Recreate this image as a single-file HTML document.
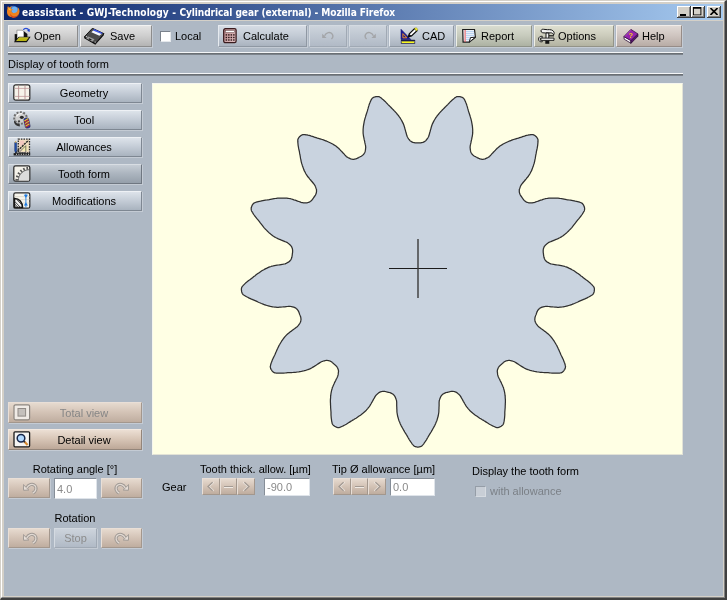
<!DOCTYPE html><html><head><meta charset="utf-8"><title>eassistant - GWJ-Technology - Cylindrical gear (external) - Mozilla Firefox</title><style>
html,body{margin:0;padding:0;}
body{width:727px;height:600px;overflow:hidden;background:#d4d0c8;font-family:"Liberation Sans",Arial,sans-serif;font-size:11px;line-height:13px;color:#000;position:relative;}
#wrap{position:absolute;left:0;top:0;width:727px;height:600px;will-change:transform;}
.abs{position:absolute;}
#frame{position:absolute;left:0;top:0;width:724px;height:597px;border:solid;border-width:1px 2px 2px 1px;border-color:#d4d0c8 #404040 #404040 #d4d0c8;}
#frame2{position:absolute;left:1px;top:1px;width:722px;height:595px;border:1px solid;border-color:#fff #808080 #808080 #fff;}
#title{position:absolute;left:4px;top:4px;width:719px;height:16px;background:linear-gradient(to right,#0a246a 0%,#a6caf0 100%);}
#title .t{position:absolute;left:17.500px;top:0px;font:bold 10.600px/16px "DejaVu Sans Condensed","DejaVu Sans","Liberation Sans",sans-serif;color:#fff;white-space:nowrap;transform:scaleX(.9535);transform-origin:0 0;}
#content{position:absolute;left:4px;top:21px;width:719px;height:575px;background:#aeb8c4;}
.wb{position:absolute;top:6px;width:14px;height:12px;background:#d4d0c8;box-shadow:inset -1px -1px 0 #404040,inset 1px 1px 0 #fff,inset -2px -2px 0 #808080;}
.tb{position:absolute;top:25px;height:22px;box-sizing:border-box;border-width:1px;border-style:solid;white-space:nowrap;}
.tb span{position:absolute;top:4px;}
.c-grey{border-color:#f2f2f2 #8c8c8c #8c8c8c #f2f2f2;background:linear-gradient(#e3e3e3,#d0d0d0 45%,#b4b4b4);}
.c-blue{border-color:#e6eaef #8f98a3 #8f98a3 #e6eaef;background:linear-gradient(#d6dce4,#c4ccd6 45%,#aab3bf);}
.c-dis{border-color:#d4dae1 #a0a9b4 #a0a9b4 #d4dae1;background:linear-gradient(#cdd4dc,#c0c8d2 45%,#b1bac6);}
.c-green{border-color:#eceee6 #8f9388 #8f9388 #eceee6;background:linear-gradient(#d9dcd0,#c8ccbe 45%,#adb2a3);}
.c-olive{border-color:#efefe6 #939388 #939388 #efefe6;background:linear-gradient(#dedfd0,#cdcdbd 45%,#b3b3a2);}
.c-pink{border-color:#f1ece9 #968c88 #968c88 #f1ece9;background:linear-gradient(#e0d9d5,#d0c6c1 45%,#b8aca6);}
.c-beige{border-color:#f3e9e0 #93857a #93857a #f3e9e0;background:linear-gradient(#ecdfd4,#d9c7b8 45%,#bda898);}
.c-beiged{border-color:#e9dfd7 #a3978d #a3978d #e9dfd7;background:linear-gradient(#e6dacf,#d5c5b8 45%,#bfad9f);}
.c-nav{border-color:#eef1f5 #7e8792 #7e8792 #eef1f5;background:linear-gradient(#dde3ea,#c6ced8 45%,#a9b3bf);}
.c-navsel{border-color:#d8dde3 #6f7781 #6f7781 #d8dde3;background:linear-gradient(#c6cdd5,#adb6c0 45%,#959faa);}
.sep{position:absolute;left:8px;width:675px;height:3px;}
.sep i{position:absolute;left:0;top:0;width:100%;height:1px;background:#f4f6f8;}
.sep b{position:absolute;left:0;top:1px;width:100%;height:1px;background:#6a6f74;}
.sep u{position:absolute;left:0;top:2px;width:100%;height:1px;background:#7d848c;}
.nb{position:absolute;left:8px;width:134px;height:20px;box-sizing:border-box;border-width:1px;border-style:solid;}
.nb span{position:absolute;left:18px;right:0;top:3px;text-align:center;}
.rb{position:absolute;height:20px;box-sizing:border-box;border-width:1px;border-style:solid;}
.sb{position:absolute;top:478px;height:17px;box-sizing:border-box;border-width:1px;border-style:solid;}
.tf{position:absolute;box-sizing:border-box;background:#fff;border:1px solid;border-color:#868e98 #dfe4ea #dfe4ea #868e98;color:#8a8a8a;}
.tf span{position:absolute;left:2px;top:2px;}
.lbl{position:absolute;white-space:nowrap;}
.ico{position:absolute;}
.tb,.nb,.rb{box-shadow:1px 1px 0 rgba(255,255,255,.28);}
</style></head><body>
<div id="wrap"><div id="frame"></div><div id="frame2"></div>
<div id="title"><svg class="ico" style="left:1.500px;top:0.500px" width="14" height="14" viewBox="0 0 14 14"><circle cx="7.300" cy="6.500" r="5.800" fill="#2f6fd6"/><circle cx="8.500" cy="5" r="3.200" fill="#6fb0f0"/><path d="M1.500 3.500C1.200 2.500 1.600 1.500 2.200 1c.1.800.5 1.300 1 1.600C4.500 1.500 6 1.200 7 1.500 5.500 2 4.800 3 4.800 4c.8.300 1.800.200 2.400.600-.6.800-1.500.900-1.900 1.400.3 1.300 1.500 2.100 2.800 2.100 1.800 0 3.200-1.200 3.600-2.800.4-1.200.2-2.400-.2-3.300 1.400 1 2.200 2.800 2 4.800-.3 3-2.800 5.200-5.800 5.200C4 13 1 10.300 1 7c0-1.300.1-2.500.5-3.500z" fill="#f0821e"/><path d="M7.500 13c3-.1 5.300-2.300 5.900-5-.6 2-2.500 3.400-4.700 3.400-2 0-3.800-1.200-4.500-3-.2 2.400 1.200 4.300 3.300 4.600z" fill="#d9491a"/><path d="M2 3.500c.8-.5 1.800-.3 2.600.3-.2.600-.1 1.200.2 1.700C3.600 5.500 2.600 4.700 2 3.500z" fill="#fbc32d"/></svg><span class="t"><span style="letter-spacing:.13px">eassistant - GWJ-Technology - </span><span style="letter-spacing:-.1px">Cylindrical gear (external) - Mozilla Firefox</span></span></div>
<div class="wb" style="left:677px"><div class="abs" style="left:3px;top:8px;width:6px;height:2px;background:#000"></div></div>
<div class="wb" style="left:691px"><div class="abs" style="left:2px;top:1px;width:7px;height:6px;border:1px solid #000;border-top-width:2px;box-sizing:content-box;transform:scale(.93);transform-origin:0 0"></div></div>
<div class="wb" style="left:707px"><svg class="ico" style="left:3px;top:2px" width="8" height="7" viewBox="0 0 8 7"><path d="M.5 0L7.500 7M7.500 0L.5 7" stroke="#000" stroke-width="1.600"/></svg></div>
<div id="content"></div>
<div class="tb c-grey" style="left:8px;width:70px"><svg class="ico" style="left:4px;top:1px" width="18" height="17" viewBox="-1 -1 17 16"><path d="M2.700 2h5l1.600 1.600v6.400H2.700z" fill="#fff" stroke="#777" stroke-width=".6"/><path d="M9.300 2.900l3.300 2.800v3H9.300z" fill="#111"/><path d="M.6 5.700h2.300v7.100H.6z" fill="#111"/><path d="M1 12.800L4.700 8.600h10L11.800 12.800z" fill="#b9b512" stroke="#111" stroke-width="1"/><path d="M2.300 12.300l2.700-3.200h8.800" fill="none" stroke="#dedb4c" stroke-width=".7"/><path d="M8.800 1.800c.8-2 4-2.300 5.300.3" fill="none" stroke="#2a4fd8" stroke-width="1.200"/><path d="M14.900 0.800l-.2 3-2.500-1.300z" fill="#1a3fd0"/></svg><span style="left:25px">Open</span></div>
<div class="tb c-grey" style="left:80px;width:72px"><svg class="ico" style="left:3px;top:2px" width="21" height="17" viewBox="0 0 21 17"><path d="M8.400.3L20 5.700 11.300 15.600.2 9z" fill="#4a4a4a" stroke="#151515" stroke-width="1"/><path d="M.2 9l11.100 6.600L20 5.700v1.400l-8.700 9.700L.2 10.300z" fill="#0c0c0c"/><path d="M10 1.100l8.700 3.800-1.100 1.200L9 2.400z" fill="#3a55f0"/><path d="M9 2.400l8.600 3.700-2.200 1.600L7.400 4.300z" fill="#f4f6ff"/><path d="M4.300 8.400l6.200 2.900-2.100 2.500L2.200 10.500z" fill="#9c9c9c"/><path d="M5.200 10.300l2.600 1.300-.9 1L4.400 11.200z" fill="#1a1a1a"/><circle cx="2.600" cy="8.600" r=".6" fill="#ddd"/><circle cx="11.200" cy="14" r=".6" fill="#ddd"/></svg><span style="left:29px">Save</span></div>
<div class="abs" style="left:160px;top:31px;width:11px;height:11px;box-sizing:border-box;background:#fff;border:1px solid;border-color:#7a828c #e4e8ec #e4e8ec #7a828c"></div><div class="lbl" style="left:175px;top:30px">Local</div>
<div class="tb c-blue" style="left:218px;width:89px"><svg class="ico" style="left:4px;top:2px" width="14" height="16" viewBox="0 0 14 16"><defs><linearGradient id="cg" x1="0" y1="0" x2="1" y2="1"><stop offset="0" stop-color="#b88486"/><stop offset="1" stop-color="#e6c6c8"/></linearGradient></defs><rect x=".7" y=".7" width="12.400" height="14" rx="1.600" fill="url(#cg)" stroke="#3a1c1e" stroke-width="1.300"/><rect x="2.300" y="2.400" width="9.200" height="2.200" fill="#fff" stroke="#5a3a3a" stroke-width=".5"/><rect x="2.6" y="6.2" width="1.500" height="1.400" fill="#2a1616"/><rect x="5.1" y="6.2" width="1.500" height="1.400" fill="#2a1616"/><rect x="7.6" y="6.2" width="1.500" height="1.400" fill="#2a1616"/><rect x="10.1" y="6.2" width="1.500" height="1.400" fill="#2a1616"/><rect x="2.6" y="8.8" width="1.500" height="1.400" fill="#2a1616"/><rect x="5.1" y="8.8" width="1.500" height="1.400" fill="#2a1616"/><rect x="7.6" y="8.8" width="1.500" height="1.400" fill="#2a1616"/><rect x="10.1" y="8.8" width="1.500" height="1.400" fill="#2a1616"/><rect x="2.6" y="11.3" width="1.500" height="1.400" fill="#2a1616"/><rect x="5.1" y="11.3" width="1.500" height="1.400" fill="#2a1616"/><rect x="7.6" y="11.3" width="1.500" height="1.400" fill="#2a1616"/><rect x="10.1" y="11.3" width="1.500" height="1.400" fill="#2a1616"/></svg><span style="left:24px">Calculate</span></div>
<div class="tb c-dis" style="left:309px;width:38px"><svg class="ico" style="left:12px;top:5px" width="12" height="9" viewBox="0 0 12 9"><path d="M.2 2.800V7.100H4.600z" fill="#a3a5a8"/><path d="M2.600 4.700C4 1.300 8.300.400 10.200 3.200c1.200 1.800.5 3.700-.8 4.800" fill="none" stroke="#a3a5a8" stroke-width="1.400"/></svg><span style="left:-310px"></span></div>
<div class="tb c-dis" style="left:349px;width:38px"><svg class="ico" style="left:14px;top:5px" width="12" height="9" viewBox="0 0 12 9"><g transform="translate(12,0) scale(-1,1)"><path d="M.2 2.800V7.100H4.600z" fill="#a3a5a8"/><path d="M2.600 4.700C4 1.300 8.300.400 10.200 3.200c1.200 1.800.5 3.700-.8 4.800" fill="none" stroke="#a3a5a8" stroke-width="1.400"/></g></svg><span style="left:-350px"></span></div>
<div class="tb c-blue" style="left:389px;width:65px"><svg class="ico" style="left:10px;top:1px" width="19" height="18" viewBox="0 0 19 18"><path d="M1 2.300V12.500H10.800z" fill="#1c1c96" stroke="#14146e" stroke-width=".6"/><path d="M2.900 6.600V10.800H6.900z" fill="#1c1c96" stroke="#ee8a1e" stroke-width="1"/><rect x="1.200" y="13.600" width="13.600" height="2.800" fill="#f8f820" stroke="#14145a" stroke-width=".7"/><path d="M1.200 13.300h13.600" stroke="#101040" stroke-width="1"/><path d="M3 13.500v1.400M5 13.500v1.400M7 13.500v1.400M9 13.500v1.400M11 13.500v1.400M13 13.500v1.400" stroke="#14145a" stroke-width=".8"/><path d="M8.300 9.800l1-3 5.300-5.300 2.400 2.200-5.500 5.200z" fill="#fff" stroke="#0c0c0c" stroke-width="1.200"/><path d="M8.300 9.800l1-2.800 2 1.800z" fill="#0c0c0c"/><path d="M14.300 1.800l1.700-1.300 1.900 1.800-1.300 1.700z" fill="#f6f230" stroke="#77771a" stroke-width=".4"/></svg><span style="left:32px">CAD</span></div>
<div class="tb c-green" style="left:456px;width:76px"><svg class="ico" style="left:5px;top:3px" width="15" height="15" viewBox="0 0 15 15"><path d="M.7.500H12.500l.9 7.700L7.200 13.200H1.100z" fill="#eef3fa" stroke="#1c1c1c" stroke-width="1.200"/><path d="M3.800 2.600h8.200M3.800 4.600h8.400M3.800 6.600h8.500M3.800 8.600h6M3.800 10.600h3.500" stroke="#a8c8ee" stroke-width=".8"/><path d="M3.100 1v12" stroke="#f04848" stroke-width=".9"/><path d="M7.200 13.200L8.500 8.600l4.900-.4z" fill="#fff" stroke="#1c1c1c" stroke-width="1"/></svg><span style="left:24px">Report</span></div>
<div class="tb c-olive" style="left:534px;width:80px"><svg class="ico" style="left:3px;top:2px" width="18" height="17" viewBox="0 0 18 17"><path d="M3 3c0-1.300 1.200-2 2.600-1.700l4 .4c2.800-.3 5.300.2 6.300 2.200.5 1 .2 2.300-.3 3-.4-1.400-1.400-2-2.700-2.100l-2 .1H7.500C5.500 5 3 4.900 3 3z" fill="#f2f2f2" stroke="#141414" stroke-width="1"/><path d="M8 5h2.800v8H8z" fill="#f6f6f6" stroke="#141414" stroke-width="1"/><path d="M7.300 12.600h4v3.200h-4z" fill="#141414"/><path d="M4.300 8.300C2.300 7.900.5 9.200.5 11.100s1.800 3.200 3.800 2.700l-.3-1.500H2.400v-2.200H4z" fill="#f0f0f0" stroke="#141414" stroke-width=".9"/><path d="M4 10.100h12v2.300H4" fill="#f4f4f4" stroke="#141414" stroke-width=".9"/><path d="M11 7.800h5" stroke="#141414" stroke-width="1.200"/></svg><span style="left:23px">Options</span></div>
<div class="tb c-pink" style="left:616px;width:66px"><svg class="ico" style="left:6px;top:3px" width="16" height="15" viewBox="0 0 16 15"><path d="M.9 7.600L7.900 11.500V14.200L1.200 10.200z" fill="#fff" stroke="#2a0a34" stroke-width=".8"/><path d="M7.900 11.500L14.900 4.900V7.300L7.900 14.400z" fill="#5a1470" stroke="#2a0a34" stroke-width=".8"/><path d="M7.900.4L14.900 4.900 7.900 11.500.9 7.600z" fill="#9424ac" stroke="#3a0e48" stroke-width=".8"/><path d="M7.900 1.200L2 7.500" stroke="#c060d8" stroke-width=".6"/><text x="5.600" y="8.600" font-family="Liberation Sans,sans-serif" font-weight="bold" font-size="7.500" fill="#f6d020">?</text></svg><span style="left:25px">Help</span></div>
<div class="sep" style="top:52px"><i></i><b></b><u></u></div>
<div class="lbl" style="left:8px;top:58px">Display of tooth form</div>
<div class="sep" style="top:73px"><i></i><b></b><u></u></div>
<div class="nb c-nav" style="top:83px"><svg class="ico" style="left:4px;top:0px" width="18" height="17" viewBox="0 0 18 17"><rect x=".8" y=".8" width="16" height="15.400" rx="2" fill="#f6f3ea" stroke="#2c2c2c" stroke-width="1.250"/><path d="M1.500 4.400h15M1.500 12.400h15" stroke="#c8a4a4" stroke-width=".9"/><path d="M5.600 1.500v14M12 1.500v14" stroke="#b49090" stroke-width=".9"/></svg><span>Geometry</span></div>
<div class="nb c-nav" style="top:110px"><svg class="ico" style="left:4px;top:0px" width="18" height="18" viewBox="0 0 18 18"><ellipse cx="7.500" cy="7" rx="6.300" ry="5.800" fill="#bcbcbc" stroke="#6e6e6e" stroke-width="2" stroke-dasharray="1.900 1.500"/><ellipse cx="7.500" cy="7" rx="5" ry="4.600" fill="#cfcfcf"/><path d="M3.500 5.500c1-2 3-3 5.500-2.800" fill="none" stroke="#f4f4f4" stroke-width="1.300"/><path d="M1.300 9c1 2.500 3 4 5.500 4.300v2.200c-3-.2-5-1.800-5.800-4.200z" fill="#333"/><ellipse cx="8.800" cy="6.300" rx="2" ry="1.600" fill="#2a2a2a"/><ellipse cx="6" cy="10.300" rx="1.200" ry="1" fill="#444"/><g transform="rotate(-12 14 12)"><rect x="11.600" y="7" width="4.800" height="10" rx="1.600" fill="#2436b4" stroke="#1a1a50" stroke-width=".6"/><path d="M11.800 9.500l4.400-1.600M11.800 12.200l4.400-1.600M11.800 14.900l4.400-1.600" stroke="#f2c61e" stroke-width="1.100"/><path d="M11.800 10.800l4.400-1.600M11.800 13.500l4.400-1.600M11.900 16.100l4.300-1.500" stroke="#cc2a20" stroke-width="1"/></g></svg><span>Tool</span></div>
<div class="nb c-nav" style="top:137px"><svg class="ico" style="left:4px;top:0px" width="18" height="18" viewBox="0 0 18 18"><rect x="5.300" y="1.200" width="11.200" height="13.600" fill="#f0dcc0" stroke="#2a2a2a" stroke-width="1.300" stroke-dasharray="1.500 1.100"/><rect x="6.600" y="2.600" width="4.400" height="5" fill="#f2c8c0"/><rect x="9.500" y="7.600" width="5" height="5.400" fill="#f4ecb0"/><path d="M2.500 15L15.400 2.300" stroke="#2a2a2a" stroke-width="1.500" stroke-dasharray="2.200 .8"/><path d="M6 14.500l6.800-6.800v6.800z" fill="none" stroke="#555" stroke-width=".8"/><path d="M.6 16.300h16.600" stroke="#1c1c1c" stroke-width="2.400"/><path d="M3 16.300h13" stroke="#f4f4f4" stroke-width=".9" stroke-dasharray="1 1.400"/><path d="M1.700 4.500h1.900v8.300l-.95 2-.95-2z" fill="#1e4fb0" stroke="#14285a" stroke-width=".5"/><path d="M1.700 4.500l.95-1.700.95 1.700z" fill="#e0b040"/></svg><span>Allowances</span></div>
<div class="nb c-navsel" style="top:164px"><svg class="ico" style="left:4px;top:0px" width="18" height="17" viewBox="0 0 18 17"><rect x=".8" y=".8" width="16" height="15.400" rx="1.800" fill="#f4f2ea" stroke="#2c2c2c" stroke-width="1.250"/><path d="M5.400 15.500C5.400 9.500 10.300 4.800 16.100 4.800V15.500z" fill="#dcdcdc"/><path d="M3.900 15.600C3.900 8.700 9.500 3.300 16.200 3.300" fill="none" stroke="#555" stroke-width="3" stroke-dasharray="1.600 1.700"/><path d="M5.300 15.600C5.300 9.500 10.200 4.700 16.200 4.700" fill="none" stroke="#6a6a6a" stroke-width="1"/></svg><span>Tooth form</span></div>
<div class="nb c-nav" style="top:191px"><svg class="ico" style="left:4px;top:0px" width="18" height="17" viewBox="0 0 18 17"><rect x=".8" y=".8" width="16" height="15.400" rx="1.800" fill="#f6f4ec" stroke="#2c2c2c" stroke-width="1.250"/><path d="M1.500 4.600h15M1.500 7.600h15M10 11h6.500" stroke="#d8d4c8" stroke-width=".8"/><path d="M1.500 6.600c4.800 0 8 3.600 8 9H1.500z" fill="#f0f0f0" stroke="#141414" stroke-width="1.500"/><path d="M1.800 9.500l5.700 6M1.800 12l3.800 4M1.800 14.300l1.700 1.800M3.700 7.400l5.200 5.600" stroke="#333" stroke-width=".9"/><path d="M12.900 1.500v14" stroke="#2f86e0" stroke-width="1"/><path d="M10.800 2.700h4.200l-2.100 3zM10.800 13.400h4.200l-2.100-3z" fill="#1f7ae0"/></svg><span>Modifications</span></div>
<div class="abs" style="left:152px;top:83px;width:531px;height:372px;background:#ffffe4;box-sizing:border-box;border:1px solid;border-color:#f6f6ee #e2e2d6 #e2e2d6 #f6f6ee"></div>
<svg class="abs" style="left:0;top:0" width="727" height="600" viewBox="0 0 727 600"><path d="M448.2 392.1 L447.6 392.3 L447.0 392.4 L446.4 392.5 L445.8 392.7 L445.3 392.9 L444.8 393.1 L444.3 393.3 L443.8 393.6 L443.4 393.8 L442.9 394.1 L442.5 394.5 L442.1 394.9 L441.7 395.3 L441.4 395.7 L441.1 396.1 L440.8 396.6 L440.6 397.0 L440.4 397.5 L440.2 398.0 L440.0 398.5 L439.8 399.0 L439.6 399.5 L439.5 399.9 L439.3 400.5 L439.2 401.3 L439.1 402.2 L439.1 403.4 L439.1 404.7 L439.1 406.0 L439.0 407.2 L439.0 408.5 L438.9 409.9 L438.9 411.2 L438.8 412.5 L438.6 413.7 L438.4 414.9 L438.2 416.0 L437.9 417.0 L437.6 418.0 L437.3 419.1 L437.0 420.2 L436.6 421.2 L436.1 422.3 L435.7 423.4 L435.2 424.5 L434.7 425.6 L434.1 426.6 L433.5 427.7 L432.9 428.8 L432.3 429.9 L431.7 430.9 L431.1 432.0 L430.4 433.1 L429.7 434.2 L429.1 435.2 L428.4 436.3 L427.8 437.5 L427.1 438.6 L426.5 439.7 L425.9 440.7 L425.2 441.7 L424.5 442.6 L423.9 443.5 L423.3 444.3 L422.8 444.9 L422.4 445.3 L422.1 445.7 L421.9 445.9 L421.7 446.0 L421.4 446.2 L421.1 446.4 L420.8 446.5 L420.5 446.6 L420.1 446.7 L419.8 446.8 L419.4 446.9 L419.1 446.9 L418.7 447.0 L418.3 447.0 L417.9 447.0 L417.5 447.0 L417.1 447.0 L416.7 446.9 L416.4 446.9 L416.0 446.8 L415.7 446.7 L415.3 446.6 L415.0 446.5 L414.7 446.4 L414.4 446.2 L414.1 446.0 L413.9 445.9 L413.7 445.7 L413.4 445.3 L413.0 444.9 L412.5 444.3 L411.9 443.5 L411.3 442.6 L410.6 441.7 L409.9 440.7 L409.3 439.7 L408.7 438.6 L408.0 437.5 L407.4 436.3 L406.7 435.2 L406.1 434.2 L405.4 433.1 L404.7 432.0 L404.1 430.9 L403.5 429.9 L402.9 428.8 L402.3 427.7 L401.7 426.6 L401.1 425.6 L400.6 424.5 L400.1 423.4 L399.7 422.3 L399.2 421.2 L398.8 420.2 L398.5 419.1 L398.2 418.0 L397.9 417.0 L397.6 416.0 L397.4 414.9 L397.2 413.7 L397.0 412.5 L396.9 411.2 L396.9 409.9 L396.8 408.5 L396.8 407.2 L396.7 406.0 L396.7 404.7 L396.7 403.4 L396.7 402.2 L396.6 401.3 L396.5 400.5 L396.3 399.9 L396.2 399.5 L396.0 399.0 L395.8 398.5 L395.6 398.0 L395.4 397.5 L395.2 397.0 L395.0 396.6 L394.7 396.1 L394.4 395.7 L394.1 395.3 L393.7 394.9 L393.3 394.5 L392.9 394.1 L392.4 393.8 L392.0 393.6 L391.5 393.3 L391.0 393.1 L390.5 392.9 L390.0 392.7 L389.4 392.5 L388.8 392.4 L388.2 392.3 L387.6 392.1 L387.0 392.0 L386.5 391.8 L385.9 391.7 L385.3 391.5 L384.7 391.4 L384.2 391.4 L383.6 391.4 L383.1 391.4 L382.6 391.4 L382.0 391.5 L381.5 391.6 L381.0 391.7 L380.5 391.9 L379.9 392.1 L379.5 392.4 L379.0 392.6 L378.6 392.9 L378.2 393.3 L377.8 393.6 L377.4 394.0 L377.0 394.3 L376.7 394.6 L376.3 395.0 L375.9 395.4 L375.4 396.1 L374.9 396.9 L374.4 397.9 L373.7 399.0 L373.1 400.1 L372.5 401.3 L371.8 402.4 L371.2 403.5 L370.5 404.7 L369.8 405.8 L369.1 406.8 L368.4 407.7 L367.7 408.6 L367.0 409.4 L366.3 410.2 L365.5 411.0 L364.7 411.7 L363.8 412.5 L362.9 413.3 L362.0 414.0 L361.1 414.7 L360.1 415.4 L359.1 416.1 L358.1 416.8 L357.1 417.5 L356.1 418.2 L355.0 418.8 L353.9 419.5 L352.8 420.1 L351.7 420.8 L350.7 421.4 L349.6 422.1 L348.5 422.8 L347.4 423.5 L346.3 424.2 L345.3 424.8 L344.3 425.3 L343.2 425.9 L342.3 426.3 L341.4 426.7 L340.6 427.0 L340.1 427.3 L339.7 427.4 L339.4 427.5 L339.1 427.5 L338.8 427.5 L338.4 427.6 L338.1 427.6 L337.8 427.5 L337.4 427.5 L337.1 427.4 L336.7 427.3 L336.4 427.1 L336.0 427.0 L335.7 426.8 L335.3 426.6 L335.0 426.5 L334.6 426.3 L334.3 426.1 L334.0 425.8 L333.7 425.6 L333.5 425.4 L333.2 425.1 L333.0 424.9 L332.8 424.6 L332.6 424.3 L332.5 424.0 L332.3 423.8 L332.2 423.5 L332.1 423.1 L332.0 422.5 L331.8 421.7 L331.6 420.8 L331.5 419.7 L331.3 418.5 L331.2 417.4 L331.1 416.2 L331.0 414.9 L331.0 413.6 L331.0 412.3 L330.9 411.0 L330.8 409.8 L330.7 408.5 L330.6 407.3 L330.6 406.0 L330.5 404.8 L330.5 403.5 L330.4 402.3 L330.4 401.1 L330.4 399.9 L330.5 398.7 L330.6 397.5 L330.6 396.3 L330.8 395.2 L330.9 394.0 L331.1 392.9 L331.3 391.8 L331.5 390.8 L331.8 389.7 L332.1 388.7 L332.4 387.5 L332.9 386.4 L333.4 385.2 L334.0 384.0 L334.5 382.8 L335.1 381.6 L335.7 380.5 L336.2 379.3 L336.8 378.2 L337.3 377.2 L337.7 376.2 L337.9 375.5 L338.1 374.9 L338.2 374.4 L338.2 374.0 L338.3 373.5 L338.3 372.9 L338.4 372.4 L338.5 371.9 L338.5 371.4 L338.5 370.8 L338.4 370.3 L338.3 369.8 L338.1 369.2 L337.9 368.7 L337.7 368.2 L337.5 367.7 L337.2 367.3 L336.9 366.8 L336.6 366.4 L336.2 366.0 L335.8 365.6 L335.4 365.2 L334.9 364.8 L334.5 364.4 L334.0 364.0 L333.6 363.6 L333.1 363.2 L332.7 362.8 L332.2 362.4 L331.8 362.0 L331.3 361.7 L330.8 361.5 L330.4 361.2 L329.9 361.0 L329.4 360.8 L328.9 360.7 L328.3 360.5 L327.8 360.5 L327.2 360.4 L326.7 360.4 L326.2 360.4 L325.6 360.5 L325.1 360.6 L324.6 360.8 L324.1 360.9 L323.6 361.0 L323.1 361.1 L322.7 361.3 L322.1 361.5 L321.4 361.8 L320.6 362.3 L319.6 362.9 L318.5 363.6 L317.4 364.3 L316.4 365.0 L315.3 365.7 L314.2 366.4 L313.0 367.1 L311.9 367.8 L310.8 368.4 L309.8 368.9 L308.7 369.3 L307.7 369.7 L306.7 370.0 L305.7 370.4 L304.6 370.7 L303.4 371.0 L302.3 371.2 L301.2 371.5 L300.0 371.7 L298.8 371.9 L297.6 372.0 L296.4 372.2 L295.2 372.3 L294.0 372.4 L292.7 372.5 L291.5 372.6 L290.2 372.6 L288.9 372.7 L287.7 372.7 L286.4 372.8 L285.1 373.0 L283.8 373.1 L282.5 373.2 L281.4 373.2 L280.2 373.2 L279.0 373.2 L277.9 373.2 L277.0 373.1 L276.2 373.1 L275.6 373.0 L275.2 372.9 L274.9 372.9 L274.6 372.8 L274.3 372.7 L274.0 372.5 L273.7 372.3 L273.4 372.2 L273.1 371.9 L272.9 371.7 L272.6 371.5 L272.4 371.2 L272.1 370.9 L271.9 370.6 L271.7 370.2 L271.5 369.9 L271.2 369.6 L271.0 369.3 L270.9 368.9 L270.7 368.6 L270.6 368.3 L270.5 367.9 L270.4 367.6 L270.4 367.3 L270.3 366.9 L270.3 366.6 L270.3 366.3 L270.4 366.0 L270.5 365.6 L270.6 365.0 L270.8 364.3 L271.1 363.3 L271.5 362.3 L271.9 361.2 L272.3 360.1 L272.8 359.0 L273.3 357.9 L273.9 356.7 L274.5 355.5 L275.0 354.4 L275.5 353.2 L276.0 352.1 L276.5 350.9 L277.0 349.7 L277.6 348.6 L278.1 347.5 L278.6 346.4 L279.2 345.3 L279.8 344.3 L280.4 343.2 L281.0 342.2 L281.6 341.2 L282.2 340.3 L282.9 339.3 L283.6 338.4 L284.3 337.5 L285.0 336.7 L285.7 335.9 L286.4 335.1 L287.3 334.3 L288.2 333.5 L289.2 332.7 L290.3 331.8 L291.4 331.1 L292.4 330.3 L293.4 329.5 L294.5 328.8 L295.5 328.0 L296.4 327.3 L297.2 326.7 L297.7 326.2 L298.1 325.7 L298.4 325.3 L298.7 324.9 L299.0 324.5 L299.3 324.1 L299.6 323.7 L299.9 323.2 L300.1 322.8 L300.4 322.3 L300.6 321.8 L300.7 321.3 L300.8 320.7 L300.9 320.2 L301.0 319.6 L301.0 319.1 L300.9 318.6 L300.9 318.0 L300.8 317.5 L300.6 317.0 L300.5 316.4 L300.3 315.9 L300.1 315.3 L299.8 314.7 L299.6 314.2 L299.4 313.6 L299.2 313.0 L299.0 312.4 L298.8 311.9 L298.5 311.4 L298.3 310.9 L298.0 310.4 L297.7 310.0 L297.4 309.6 L297.0 309.2 L296.6 308.8 L296.2 308.5 L295.7 308.1 L295.3 307.8 L294.8 307.6 L294.3 307.4 L293.8 307.2 L293.3 307.1 L292.8 306.9 L292.3 306.8 L291.8 306.7 L291.3 306.6 L290.8 306.5 L290.2 306.4 L289.5 306.4 L288.5 306.4 L287.3 306.5 L286.1 306.6 L284.8 306.8 L283.5 306.9 L282.2 307.0 L280.9 307.1 L279.6 307.2 L278.3 307.3 L277.0 307.3 L275.9 307.2 L274.8 307.1 L273.7 307.0 L272.6 306.8 L271.5 306.6 L270.4 306.4 L269.3 306.1 L268.2 305.8 L267.1 305.5 L265.9 305.2 L264.8 304.8 L263.7 304.4 L262.5 303.9 L261.4 303.5 L260.3 303.0 L259.1 302.5 L258.0 302.0 L256.8 301.4 L255.7 300.9 L254.5 300.4 L253.3 299.9 L252.1 299.4 L250.9 298.9 L249.8 298.4 L248.7 297.9 L247.7 297.3 L246.6 296.8 L245.7 296.2 L244.9 295.7 L244.2 295.3 L243.7 295.0 L243.3 294.7 L243.1 294.5 L242.9 294.3 L242.7 294.1 L242.5 293.8 L242.3 293.5 L242.2 293.2 L242.0 292.9 L241.9 292.6 L241.8 292.2 L241.7 291.9 L241.6 291.5 L241.6 291.1 L241.5 290.7 L241.5 290.3 L241.4 290.0 L241.4 289.6 L241.4 289.2 L241.4 288.8 L241.5 288.5 L241.5 288.1 L241.6 287.8 L241.7 287.5 L241.9 287.2 L242.0 286.9 L242.2 286.6 L242.3 286.4 L242.6 286.1 L243.0 285.6 L243.6 285.0 L244.3 284.4 L245.0 283.6 L245.9 282.8 L246.8 282.1 L247.7 281.3 L248.7 280.5 L249.8 279.8 L250.8 279.0 L251.8 278.2 L252.8 277.4 L253.8 276.6 L254.8 275.9 L255.8 275.1 L256.8 274.3 L257.8 273.6 L258.8 272.9 L259.8 272.2 L260.8 271.5 L261.8 270.8 L262.8 270.2 L263.8 269.7 L264.8 269.1 L265.8 268.6 L266.9 268.1 L267.9 267.6 L268.9 267.2 L269.9 266.8 L270.9 266.5 L272.0 266.1 L273.2 265.9 L274.5 265.6 L275.8 265.4 L277.1 265.2 L278.4 265.0 L279.7 264.8 L281.0 264.6 L282.2 264.4 L283.4 264.2 L284.3 264.0 L285.1 263.8 L285.6 263.6 L286.1 263.4 L286.5 263.2 L286.9 262.9 L287.4 262.7 L287.9 262.4 L288.4 262.2 L288.8 261.9 L289.2 261.6 L289.6 261.2 L290.0 260.8 L290.3 260.4 L290.7 260.0 L291.0 259.5 L291.2 259.0 L291.4 258.6 L291.6 258.1 L291.8 257.5 L291.9 257.0 L292.0 256.5 L292.1 255.9 L292.2 255.3 L292.3 254.7 L292.3 254.1 L292.4 253.5 L292.5 252.8 L292.6 252.2 L292.6 251.7 L292.6 251.1 L292.6 250.5 L292.6 250.0 L292.5 249.5 L292.4 248.9 L292.3 248.4 L292.1 247.9 L291.9 247.4 L291.7 246.9 L291.4 246.4 L291.1 246.0 L290.8 245.6 L290.4 245.2 L290.0 244.8 L289.6 244.5 L289.2 244.1 L288.8 243.8 L288.5 243.5 L288.1 243.2 L287.6 242.8 L286.9 242.4 L286.1 242.0 L285.0 241.6 L283.8 241.1 L282.6 240.6 L281.4 240.1 L280.3 239.6 L279.0 239.1 L277.8 238.6 L276.6 238.0 L275.5 237.5 L274.5 236.9 L273.6 236.3 L272.7 235.7 L271.8 235.0 L270.9 234.3 L270.1 233.6 L269.2 232.9 L268.4 232.1 L267.5 231.3 L266.7 230.4 L265.9 229.6 L265.0 228.7 L264.2 227.8 L263.4 226.8 L262.7 225.9 L261.9 224.9 L261.1 223.9 L260.3 222.9 L259.6 221.9 L258.8 220.9 L258.0 219.9 L257.1 218.9 L256.3 217.9 L255.5 216.9 L254.8 216.0 L254.1 215.0 L253.5 214.1 L252.9 213.1 L252.4 212.3 L252.0 211.6 L251.7 211.1 L251.5 210.7 L251.4 210.4 L251.3 210.1 L251.3 209.8 L251.2 209.5 L251.2 209.1 L251.2 208.8 L251.2 208.5 L251.2 208.1 L251.3 207.8 L251.4 207.4 L251.5 207.0 L251.6 206.7 L251.8 206.3 L251.9 205.9 L252.0 205.6 L252.2 205.2 L252.4 204.9 L252.6 204.6 L252.8 204.3 L253.0 204.0 L253.2 203.8 L253.5 203.5 L253.7 203.3 L254.0 203.1 L254.2 203.0 L254.5 202.8 L254.9 202.7 L255.4 202.5 L256.2 202.2 L257.2 201.9 L258.2 201.6 L259.3 201.3 L260.5 201.1 L261.6 200.8 L262.9 200.6 L264.1 200.4 L265.4 200.2 L266.7 200.0 L268.0 199.8 L269.2 199.6 L270.4 199.3 L271.7 199.1 L272.9 198.9 L274.1 198.7 L275.3 198.5 L276.5 198.3 L277.7 198.2 L278.9 198.1 L280.1 198.0 L281.3 198.0 L282.4 198.0 L283.6 198.0 L284.7 198.0 L285.8 198.1 L286.9 198.2 L288.0 198.3 L289.1 198.5 L290.2 198.7 L291.4 199.0 L292.7 199.4 L293.9 199.8 L295.2 200.2 L296.4 200.6 L297.6 201.1 L298.8 201.5 L300.0 201.9 L301.1 202.3 L302.1 202.6 L302.8 202.7 L303.4 202.8 L303.9 202.8 L304.4 202.8 L304.9 202.8 L305.4 202.8 L306.0 202.8 L306.5 202.8 L307.0 202.8 L307.5 202.7 L308.0 202.5 L308.6 202.4 L309.1 202.1 L309.6 201.9 L310.1 201.6 L310.5 201.3 L310.9 201.0 L311.3 200.7 L311.7 200.3 L312.1 199.9 L312.4 199.4 L312.8 199.0 L313.1 198.5 L313.5 197.9 L313.8 197.4 L314.1 197.0 L314.5 196.5 L314.8 196.0 L315.2 195.5 L315.5 195.0 L315.7 194.5 L315.9 194.0 L316.1 193.5 L316.3 193.0 L316.4 192.5 L316.5 191.9 L316.5 191.4 L316.5 190.8 L316.5 190.3 L316.5 189.7 L316.4 189.2 L316.2 188.7 L316.0 188.2 L315.9 187.7 L315.6 187.2 L315.5 186.7 L315.3 186.3 L315.1 185.8 L314.8 185.3 L314.4 184.7 L313.8 183.9 L313.1 183.0 L312.3 182.0 L311.4 181.0 L310.6 180.0 L309.8 179.1 L309.0 178.0 L308.1 177.0 L307.3 176.0 L306.6 174.9 L306.0 174.0 L305.5 173.0 L305.0 172.0 L304.5 171.1 L304.0 170.1 L303.6 169.0 L303.2 167.9 L302.8 166.8 L302.4 165.7 L302.1 164.6 L301.7 163.5 L301.4 162.3 L301.1 161.1 L300.9 159.9 L300.6 158.7 L300.4 157.5 L300.2 156.2 L300.0 155.0 L299.7 153.7 L299.5 152.5 L299.3 151.2 L299.0 150.0 L298.7 148.7 L298.5 147.5 L298.3 146.3 L298.1 145.1 L298.0 144.0 L297.9 142.9 L297.8 141.9 L297.8 141.1 L297.8 140.5 L297.8 140.1 L297.8 139.8 L297.9 139.5 L298.0 139.2 L298.1 138.9 L298.2 138.6 L298.4 138.3 L298.6 138.0 L298.8 137.7 L299.0 137.4 L299.2 137.1 L299.5 136.8 L299.8 136.6 L300.1 136.3 L300.4 136.0 L300.7 135.8 L301.0 135.6 L301.3 135.3 L301.6 135.2 L301.9 135.0 L302.2 134.9 L302.5 134.7 L302.9 134.7 L303.2 134.6 L303.5 134.5 L303.8 134.5 L304.1 134.5 L304.5 134.5 L305.1 134.6 L305.9 134.8 L306.9 134.9 L307.9 135.2 L309.1 135.4 L310.2 135.7 L311.3 136.1 L312.5 136.4 L313.8 136.9 L315.0 137.3 L316.2 137.7 L317.4 138.1 L318.6 138.4 L319.9 138.8 L321.1 139.2 L322.2 139.5 L323.4 139.9 L324.6 140.4 L325.7 140.8 L326.8 141.2 L327.9 141.7 L329.0 142.2 L330.1 142.7 L331.1 143.2 L332.1 143.7 L333.1 144.3 L334.0 144.9 L335.0 145.5 L335.9 146.1 L336.7 146.7 L337.6 147.5 L338.6 148.3 L339.5 149.2 L340.4 150.2 L341.3 151.1 L342.2 152.0 L343.1 153.0 L344.0 153.9 L344.8 154.9 L345.6 155.7 L346.3 156.4 L346.9 156.9 L347.4 157.2 L347.9 157.5 L348.3 157.7 L348.7 157.9 L349.2 158.2 L349.7 158.4 L350.2 158.6 L350.6 158.9 L351.1 159.0 L351.7 159.1 L352.2 159.2 L352.8 159.3 L353.3 159.3 L353.9 159.3 L354.4 159.2 L354.9 159.1 L355.4 159.0 L355.9 158.8 L356.4 158.6 L357.0 158.4 L357.5 158.2 L358.0 157.9 L358.6 157.6 L359.1 157.3 L359.7 157.0 L360.2 156.7 L360.7 156.5 L361.3 156.2 L361.7 155.9 L362.2 155.5 L362.6 155.2 L363.0 154.9 L363.4 154.5 L363.7 154.1 L364.1 153.7 L364.4 153.2 L364.6 152.7 L364.9 152.2 L365.1 151.7 L365.2 151.2 L365.3 150.7 L365.4 150.2 L365.5 149.6 L365.5 149.1 L365.6 148.6 L365.6 148.1 L365.7 147.6 L365.7 147.0 L365.6 146.3 L365.5 145.3 L365.2 144.2 L364.9 142.9 L364.7 141.7 L364.4 140.4 L364.1 139.2 L363.9 137.9 L363.6 136.6 L363.4 135.3 L363.2 134.0 L363.1 132.9 L363.1 131.8 L363.1 130.7 L363.1 129.6 L363.2 128.5 L363.3 127.4 L363.4 126.2 L363.6 125.1 L363.8 123.9 L364.0 122.8 L364.2 121.6 L364.5 120.4 L364.8 119.2 L365.1 118.1 L365.5 116.9 L365.8 115.7 L366.2 114.5 L366.6 113.3 L367.0 112.1 L367.4 110.9 L367.7 109.6 L368.1 108.4 L368.4 107.1 L368.8 105.9 L369.1 104.8 L369.5 103.7 L370.0 102.6 L370.4 101.6 L370.8 100.7 L371.1 100.0 L371.4 99.4 L371.6 99.1 L371.8 98.8 L372.0 98.6 L372.2 98.4 L372.4 98.1 L372.7 97.9 L373.0 97.7 L373.3 97.5 L373.6 97.4 L373.9 97.2 L374.3 97.1 L374.6 97.0 L375.0 96.9 L375.4 96.8 L375.7 96.7 L376.1 96.6 L376.5 96.5 L376.9 96.5 L377.3 96.5 L377.6 96.5 L377.9 96.5 L378.3 96.5 L378.6 96.6 L379.0 96.7 L379.3 96.8 L379.5 96.9 L379.8 97.1 L380.1 97.3 L380.6 97.6 L381.3 98.1 L382.0 98.7 L382.9 99.4 L383.8 100.2 L384.6 101.0 L385.5 101.8 L386.3 102.7 L387.2 103.6 L388.1 104.6 L389.0 105.5 L389.9 106.4 L390.8 107.3 L391.7 108.2 L392.6 109.1 L393.5 110.0 L394.3 110.9 L395.2 111.8 L396.0 112.7 L396.8 113.6 L397.5 114.5 L398.3 115.4 L399.0 116.4 L399.7 117.3 L400.3 118.2 L400.9 119.2 L401.5 120.2 L402.0 121.1 L402.5 122.1 L403.0 123.1 L403.5 124.1 L403.9 125.3 L404.3 126.5 L404.7 127.8 L405.0 129.1 L405.4 130.3 L405.7 131.5 L406.1 132.8 L406.4 134.0 L406.7 135.1 L407.0 136.1 L407.3 136.8 L407.6 137.3 L407.9 137.7 L408.1 138.1 L408.4 138.5 L408.7 139.0 L409.0 139.4 L409.3 139.8 L409.7 140.2 L410.0 140.6 L410.4 141.0 L410.9 141.3 L411.4 141.6 L411.8 141.9 L412.3 142.1 L412.8 142.3 L413.3 142.5 L413.8 142.6 L414.4 142.7 L414.9 142.8 L415.5 142.8 L416.1 142.8 L416.7 142.8 L417.3 142.8 L417.9 142.8 L418.5 142.8 L419.1 142.8 L419.7 142.8 L420.3 142.8 L420.9 142.8 L421.4 142.7 L422.0 142.6 L422.5 142.5 L423.0 142.3 L423.5 142.1 L424.0 141.9 L424.4 141.6 L424.9 141.3 L425.4 141.0 L425.8 140.6 L426.1 140.2 L426.5 139.8 L426.8 139.4 L427.1 139.0 L427.4 138.5 L427.7 138.1 L427.9 137.7 L428.2 137.3 L428.5 136.8 L428.8 136.1 L429.1 135.1 L429.4 134.0 L429.7 132.8 L430.1 131.5 L430.4 130.3 L430.8 129.1 L431.1 127.8 L431.5 126.5 L431.9 125.3 L432.3 124.1 L432.8 123.1 L433.3 122.1 L433.8 121.1 L434.3 120.2 L434.9 119.2 L435.5 118.2 L436.1 117.3 L436.8 116.4 L437.5 115.4 L438.3 114.5 L439.0 113.6 L439.8 112.7 L440.6 111.8 L441.5 110.9 L442.3 110.0 L443.2 109.1 L444.1 108.2 L445.0 107.3 L445.9 106.4 L446.8 105.5 L447.7 104.6 L448.6 103.6 L449.5 102.7 L450.3 101.8 L451.2 101.0 L452.0 100.2 L452.9 99.4 L453.8 98.7 L454.5 98.1 L455.2 97.6 L455.7 97.3 L456.0 97.1 L456.3 96.9 L456.5 96.8 L456.8 96.7 L457.2 96.6 L457.5 96.5 L457.9 96.5 L458.2 96.5 L458.5 96.5 L458.9 96.5 L459.3 96.5 L459.7 96.6 L460.1 96.7 L460.4 96.8 L460.8 96.9 L461.2 97.0 L461.5 97.1 L461.9 97.2 L462.2 97.4 L462.5 97.5 L462.8 97.7 L463.1 97.9 L463.4 98.1 L463.6 98.4 L463.8 98.6 L464.0 98.8 L464.2 99.1 L464.4 99.4 L464.7 100.0 L465.0 100.7 L465.4 101.6 L465.8 102.6 L466.3 103.7 L466.7 104.8 L467.0 105.9 L467.4 107.1 L467.7 108.4 L468.1 109.6 L468.4 110.9 L468.8 112.1 L469.2 113.3 L469.6 114.5 L470.0 115.7 L470.3 116.9 L470.7 118.1 L471.0 119.2 L471.3 120.4 L471.6 121.6 L471.8 122.8 L472.0 123.9 L472.2 125.1 L472.4 126.2 L472.5 127.4 L472.6 128.5 L472.7 129.6 L472.7 130.7 L472.7 131.8 L472.7 132.9 L472.6 134.0 L472.4 135.3 L472.2 136.6 L471.9 137.9 L471.7 139.2 L471.4 140.4 L471.1 141.7 L470.9 142.9 L470.6 144.2 L470.3 145.3 L470.2 146.3 L470.1 147.0 L470.1 147.6 L470.2 148.1 L470.2 148.6 L470.3 149.1 L470.3 149.6 L470.4 150.2 L470.5 150.7 L470.6 151.2 L470.7 151.7 L470.9 152.2 L471.2 152.7 L471.4 153.2 L471.7 153.7 L472.1 154.1 L472.4 154.5 L472.8 154.9 L473.2 155.2 L473.6 155.5 L474.1 155.9 L474.5 156.2 L475.1 156.5 L475.6 156.7 L476.1 157.0 L476.7 157.3 L477.2 157.6 L477.8 157.9 L478.3 158.2 L478.8 158.4 L479.4 158.6 L479.9 158.8 L480.4 159.0 L480.9 159.1 L481.4 159.2 L481.9 159.3 L482.5 159.3 L483.0 159.3 L483.6 159.2 L484.1 159.1 L484.7 159.0 L485.2 158.9 L485.6 158.6 L486.1 158.4 L486.6 158.2 L487.1 157.9 L487.5 157.7 L487.9 157.5 L488.4 157.2 L488.9 156.9 L489.5 156.4 L490.2 155.7 L491.0 154.9 L491.8 153.9 L492.7 153.0 L493.6 152.0 L494.5 151.1 L495.4 150.2 L496.3 149.2 L497.2 148.3 L498.2 147.5 L499.1 146.7 L499.9 146.1 L500.8 145.5 L501.8 144.9 L502.7 144.3 L503.7 143.7 L504.7 143.2 L505.7 142.7 L506.8 142.2 L507.9 141.7 L509.0 141.2 L510.1 140.8 L511.2 140.4 L512.4 139.9 L513.6 139.5 L514.7 139.2 L515.9 138.8 L517.2 138.4 L518.4 138.1 L519.6 137.7 L520.8 137.3 L522.0 136.9 L523.3 136.4 L524.5 136.1 L525.6 135.7 L526.7 135.4 L527.9 135.2 L528.9 134.9 L529.9 134.8 L530.7 134.6 L531.3 134.5 L531.7 134.5 L532.0 134.5 L532.3 134.5 L532.6 134.6 L532.9 134.7 L533.3 134.7 L533.6 134.9 L533.9 135.0 L534.2 135.2 L534.5 135.3 L534.8 135.6 L535.1 135.8 L535.4 136.0 L535.7 136.3 L536.0 136.6 L536.3 136.8 L536.6 137.1 L536.8 137.4 L537.0 137.7 L537.2 138.0 L537.4 138.3 L537.6 138.6 L537.7 138.9 L537.8 139.2 L537.9 139.5 L538.0 139.8 L538.0 140.1 L538.0 140.5 L538.0 141.1 L538.0 141.9 L537.9 142.9 L537.8 144.0 L537.7 145.1 L537.5 146.3 L537.3 147.5 L537.1 148.7 L536.8 150.0 L536.5 151.2 L536.3 152.5 L536.1 153.7 L535.8 155.0 L535.6 156.2 L535.4 157.5 L535.2 158.7 L534.9 159.9 L534.7 161.1 L534.4 162.3 L534.1 163.5 L533.7 164.6 L533.4 165.7 L533.0 166.8 L532.6 167.9 L532.2 169.0 L531.8 170.1 L531.3 171.1 L530.8 172.0 L530.3 173.0 L529.8 174.0 L529.2 174.9 L528.5 176.0 L527.7 177.0 L526.8 178.0 L526.0 179.1 L525.2 180.0 L524.4 181.0 L523.5 182.0 L522.7 183.0 L522.0 183.9 L521.4 184.7 L521.0 185.3 L520.7 185.8 L520.5 186.3 L520.3 186.7 L520.2 187.2 L519.9 187.7 L519.8 188.2 L519.6 188.7 L519.4 189.2 L519.3 189.7 L519.3 190.3 L519.3 190.8 L519.3 191.4 L519.3 191.9 L519.4 192.5 L519.5 193.0 L519.7 193.5 L519.9 194.0 L520.1 194.5 L520.3 195.0 L520.6 195.5 L521.0 196.0 L521.3 196.5 L521.7 197.0 L522.0 197.4 L522.3 197.9 L522.7 198.5 L523.0 199.0 L523.4 199.4 L523.7 199.9 L524.1 200.3 L524.5 200.7 L524.9 201.0 L525.3 201.3 L525.7 201.6 L526.2 201.9 L526.7 202.1 L527.2 202.4 L527.8 202.5 L528.3 202.7 L528.8 202.8 L529.3 202.8 L529.8 202.8 L530.4 202.8 L530.9 202.8 L531.4 202.8 L531.9 202.8 L532.4 202.8 L533.0 202.7 L533.7 202.6 L534.7 202.3 L535.8 201.9 L537.0 201.5 L538.2 201.1 L539.4 200.6 L540.6 200.2 L541.9 199.8 L543.1 199.4 L544.4 199.0 L545.6 198.7 L546.7 198.5 L547.8 198.3 L548.9 198.2 L550.0 198.1 L551.1 198.0 L552.2 198.0 L553.4 198.0 L554.5 198.0 L555.7 198.0 L556.9 198.1 L558.1 198.2 L559.3 198.3 L560.5 198.5 L561.7 198.7 L562.9 198.9 L564.1 199.1 L565.4 199.3 L566.6 199.6 L567.8 199.8 L569.1 200.0 L570.4 200.2 L571.7 200.4 L572.9 200.6 L574.2 200.8 L575.3 201.1 L576.5 201.3 L577.6 201.6 L578.6 201.9 L579.6 202.2 L580.4 202.5 L580.9 202.7 L581.3 202.8 L581.6 203.0 L581.8 203.1 L582.1 203.3 L582.3 203.5 L582.6 203.8 L582.8 204.0 L583.0 204.3 L583.2 204.6 L583.4 204.9 L583.6 205.2 L583.8 205.6 L583.9 205.9 L584.0 206.3 L584.2 206.7 L584.3 207.0 L584.4 207.4 L584.5 207.8 L584.6 208.1 L584.6 208.5 L584.6 208.8 L584.6 209.1 L584.6 209.5 L584.5 209.8 L584.5 210.1 L584.4 210.4 L584.3 210.7 L584.1 211.1 L583.8 211.6 L583.4 212.3 L582.9 213.1 L582.3 214.1 L581.7 215.0 L581.0 216.0 L580.3 216.9 L579.5 217.9 L578.7 218.9 L577.8 219.9 L577.0 220.9 L576.2 221.9 L575.5 222.9 L574.7 223.9 L573.9 224.9 L573.1 225.9 L572.4 226.8 L571.6 227.8 L570.8 228.7 L569.9 229.6 L569.1 230.4 L568.3 231.3 L567.4 232.1 L566.6 232.9 L565.7 233.6 L564.9 234.3 L564.0 235.0 L563.1 235.7 L562.2 236.3 L561.3 236.9 L560.3 237.5 L559.2 238.0 L558.0 238.6 L556.8 239.1 L555.5 239.6 L554.4 240.1 L553.2 240.6 L552.0 241.1 L550.8 241.6 L549.7 242.0 L548.9 242.4 L548.2 242.8 L547.7 243.2 L547.3 243.5 L547.0 243.8 L546.6 244.1 L546.2 244.5 L545.8 244.8 L545.4 245.2 L545.0 245.6 L544.7 246.0 L544.4 246.4 L544.1 246.9 L543.9 247.4 L543.7 247.9 L543.5 248.4 L543.4 248.9 L543.3 249.5 L543.2 250.0 L543.2 250.5 L543.2 251.1 L543.2 251.7 L543.2 252.2 L543.3 252.8 L543.4 253.5 L543.5 254.1 L543.5 254.7 L543.6 255.3 L543.7 255.9 L543.8 256.5 L543.9 257.0 L544.0 257.5 L544.2 258.1 L544.4 258.6 L544.6 259.0 L544.8 259.5 L545.1 260.0 L545.5 260.4 L545.8 260.8 L546.2 261.2 L546.6 261.6 L547.0 261.9 L547.4 262.2 L547.9 262.4 L548.4 262.7 L548.9 262.9 L549.3 263.2 L549.7 263.4 L550.2 263.6 L550.7 263.8 L551.5 264.0 L552.4 264.2 L553.6 264.4 L554.8 264.6 L556.1 264.8 L557.4 265.0 L558.7 265.2 L560.0 265.4 L561.3 265.6 L562.6 265.9 L563.8 266.1 L564.9 266.5 L565.9 266.8 L566.9 267.2 L567.9 267.6 L568.9 268.1 L570.0 268.6 L571.0 269.1 L572.0 269.7 L573.0 270.2 L574.0 270.8 L575.0 271.5 L576.0 272.2 L577.0 272.9 L578.0 273.6 L579.0 274.3 L580.0 275.1 L581.0 275.9 L582.0 276.6 L583.0 277.4 L584.0 278.2 L585.0 279.0 L586.0 279.8 L587.1 280.5 L588.1 281.3 L589.0 282.1 L589.9 282.8 L590.8 283.6 L591.5 284.4 L592.2 285.0 L592.8 285.6 L593.2 286.1 L593.5 286.4 L593.6 286.6 L593.8 286.9 L593.9 287.2 L594.1 287.5 L594.2 287.8 L594.3 288.1 L594.3 288.5 L594.4 288.8 L594.4 289.2 L594.4 289.6 L594.4 290.0 L594.3 290.3 L594.3 290.7 L594.2 291.1 L594.2 291.5 L594.1 291.9 L594.0 292.2 L593.9 292.6 L593.8 292.9 L593.6 293.2 L593.5 293.5 L593.3 293.8 L593.1 294.1 L592.9 294.3 L592.7 294.5 L592.5 294.7 L592.1 295.0 L591.6 295.3 L590.9 295.7 L590.1 296.2 L589.2 296.8 L588.1 297.3 L587.1 297.9 L586.0 298.4 L584.9 298.9 L583.7 299.4 L582.5 299.9 L581.3 300.4 L580.1 300.9 L579.0 301.4 L577.8 302.0 L576.7 302.5 L575.5 303.0 L574.4 303.5 L573.3 303.9 L572.1 304.4 L571.0 304.8 L569.9 305.2 L568.7 305.5 L567.6 305.8 L566.5 306.1 L565.4 306.4 L564.3 306.6 L563.2 306.8 L562.1 307.0 L561.0 307.1 L559.9 307.2 L558.8 307.3 L557.5 307.3 L556.2 307.2 L554.9 307.1 L553.6 307.0 L552.3 306.9 L551.0 306.8 L549.7 306.6 L548.5 306.5 L547.3 306.4 L546.3 306.4 L545.6 306.4 L545.0 306.5 L544.5 306.6 L544.0 306.7 L543.5 306.8 L543.0 306.9 L542.5 307.1 L542.0 307.2 L541.5 307.4 L541.0 307.6 L540.5 307.8 L540.1 308.1 L539.6 308.5 L539.2 308.8 L538.8 309.2 L538.4 309.6 L538.1 310.0 L537.8 310.4 L537.5 310.9 L537.3 311.4 L537.0 311.9 L536.8 312.4 L536.6 313.0 L536.4 313.6 L536.2 314.2 L536.0 314.7 L535.7 315.3 L535.5 315.9 L535.3 316.4 L535.2 317.0 L535.0 317.5 L534.9 318.0 L534.9 318.6 L534.8 319.1 L534.8 319.6 L534.9 320.2 L535.0 320.7 L535.1 321.3 L535.2 321.8 L535.4 322.3 L535.7 322.8 L535.9 323.2 L536.2 323.7 L536.5 324.1 L536.8 324.5 L537.1 324.9 L537.4 325.3 L537.7 325.7 L538.1 326.2 L538.6 326.7 L539.4 327.3 L540.3 328.0 L541.3 328.8 L542.4 329.5 L543.4 330.3 L544.4 331.1 L545.5 331.8 L546.6 332.7 L547.6 333.5 L548.5 334.3 L549.4 335.1 L550.1 335.9 L550.8 336.7 L551.5 337.5 L552.2 338.4 L552.9 339.3 L553.6 340.3 L554.2 341.2 L554.8 342.2 L555.4 343.2 L556.0 344.3 L556.6 345.3 L557.2 346.4 L557.7 347.5 L558.2 348.6 L558.8 349.7 L559.3 350.9 L559.8 352.1 L560.3 353.2 L560.8 354.4 L561.3 355.5 L561.9 356.7 L562.5 357.9 L563.0 359.0 L563.5 360.1 L563.9 361.2 L564.3 362.3 L564.7 363.3 L565.0 364.3 L565.2 365.0 L565.3 365.6 L565.4 366.0 L565.5 366.3 L565.5 366.6 L565.5 366.9 L565.4 367.3 L565.4 367.6 L565.3 367.9 L565.2 368.3 L565.1 368.6 L564.9 368.9 L564.8 369.3 L564.6 369.6 L564.3 369.9 L564.1 370.2 L563.9 370.6 L563.7 370.9 L563.4 371.2 L563.2 371.5 L562.9 371.7 L562.7 371.9 L562.4 372.2 L562.1 372.3 L561.8 372.5 L561.5 372.7 L561.2 372.8 L560.9 372.9 L560.6 372.9 L560.2 373.0 L559.6 373.1 L558.8 373.1 L557.9 373.2 L556.8 373.2 L555.6 373.2 L554.4 373.2 L553.3 373.2 L552.0 373.1 L550.7 373.0 L549.4 372.8 L548.1 372.7 L546.9 372.7 L545.6 372.6 L544.3 372.6 L543.1 372.5 L541.8 372.4 L540.6 372.3 L539.4 372.2 L538.2 372.0 L537.0 371.9 L535.8 371.7 L534.6 371.5 L533.5 371.2 L532.4 371.0 L531.2 370.7 L530.1 370.4 L529.1 370.0 L528.1 369.7 L527.1 369.3 L526.0 368.9 L525.0 368.4 L523.9 367.8 L522.8 367.1 L521.6 366.4 L520.5 365.7 L519.4 365.0 L518.4 364.3 L517.3 363.6 L516.2 362.9 L515.2 362.3 L514.4 361.8 L513.7 361.5 L513.1 361.3 L512.7 361.1 L512.2 361.0 L511.7 360.9 L511.2 360.8 L510.7 360.6 L510.2 360.5 L509.6 360.4 L509.1 360.4 L508.6 360.4 L508.0 360.5 L507.5 360.5 L506.9 360.7 L506.4 360.8 L505.9 361.0 L505.4 361.2 L505.0 361.5 L504.5 361.7 L504.0 362.0 L503.6 362.4 L503.1 362.8 L502.7 363.2 L502.2 363.6 L501.8 364.0 L501.3 364.4 L500.9 364.8 L500.4 365.2 L500.0 365.6 L499.6 366.0 L499.2 366.4 L498.9 366.8 L498.6 367.3 L498.3 367.7 L498.1 368.2 L497.9 368.7 L497.7 369.2 L497.5 369.8 L497.4 370.3 L497.3 370.8 L497.3 371.4 L497.3 371.9 L497.4 372.4 L497.5 372.9 L497.5 373.5 L497.6 374.0 L497.6 374.4 L497.7 374.9 L497.9 375.5 L498.1 376.2 L498.5 377.2 L499.0 378.2 L499.6 379.3 L500.1 380.5 L500.7 381.6 L501.3 382.8 L501.8 384.0 L502.4 385.2 L502.9 386.4 L503.4 387.5 L503.7 388.7 L504.0 389.7 L504.3 390.8 L504.5 391.8 L504.7 392.9 L504.9 394.0 L505.0 395.2 L505.2 396.3 L505.2 397.5 L505.3 398.7 L505.4 399.9 L505.4 401.1 L505.4 402.3 L505.3 403.5 L505.3 404.8 L505.2 406.0 L505.2 407.3 L505.1 408.5 L505.0 409.8 L504.9 411.0 L504.8 412.3 L504.8 413.6 L504.8 414.9 L504.7 416.2 L504.6 417.4 L504.5 418.5 L504.3 419.7 L504.2 420.8 L504.0 421.7 L503.8 422.5 L503.7 423.1 L503.6 423.5 L503.5 423.8 L503.3 424.0 L503.2 424.3 L503.0 424.6 L502.8 424.9 L502.6 425.1 L502.3 425.4 L502.1 425.6 L501.8 425.8 L501.5 426.1 L501.2 426.3 L500.8 426.5 L500.5 426.6 L500.1 426.8 L499.8 427.0 L499.4 427.1 L499.1 427.3 L498.7 427.4 L498.4 427.5 L498.0 427.5 L497.7 427.6 L497.4 427.6 L497.0 427.5 L496.7 427.5 L496.4 427.5 L496.1 427.4 L495.7 427.3 L495.2 427.0 L494.4 426.7 L493.5 426.3 L492.6 425.9 L491.5 425.3 L490.5 424.8 L489.5 424.2 L488.4 423.5 L487.3 422.8 L486.2 422.1 L485.1 421.4 L484.1 420.8 L483.0 420.1 L481.9 419.5 L480.8 418.8 L479.7 418.2 L478.7 417.5 L477.7 416.8 L476.7 416.1 L475.7 415.4 L474.7 414.7 L473.8 414.0 L472.9 413.3 L472.0 412.5 L471.1 411.7 L470.3 411.0 L469.5 410.2 L468.8 409.4 L468.1 408.6 L467.4 407.7 L466.7 406.8 L466.0 405.8 L465.3 404.7 L464.6 403.5 L464.0 402.4 L463.3 401.3 L462.7 400.1 L462.1 399.0 L461.4 397.9 L460.9 396.9 L460.4 396.1 L459.9 395.4 L459.5 395.0 L459.1 394.6 L458.8 394.3 L458.4 394.0 L458.0 393.6 L457.6 393.3 L457.2 392.9 L456.8 392.6 L456.3 392.4 L455.9 392.1 L455.3 391.9 L454.8 391.7 L454.3 391.6 L453.8 391.5 L453.2 391.4 L452.7 391.4 L452.2 391.4 L451.6 391.4 L451.1 391.4 L450.5 391.5 L449.9 391.7 L449.3 391.8 L448.8 392.0Z" fill="#c9d3df" stroke="#303030" stroke-width="1.25" stroke-linejoin="round"/><path d="M389 268.500h58" stroke="#1c1c1c" stroke-width="1"/><path d="M418 239v59" stroke="#3a3a3a" stroke-width="1.400"/></svg>
<div class="nb c-beiged" style="top:402px;height:21px"><svg class="ico" style="left:4px;top:1px" width="18" height="17" viewBox="0 0 18 17"><rect x="1" y=".8" width="15.600" height="15" rx="1.500" fill="#f0ebe6" stroke="#8c8680" stroke-width="1.200"/><rect x="5" y="4.500" width="7.600" height="7.600" fill="#c4c0bc" stroke="#908a86" stroke-width="1"/></svg><span style="color:#868686;top:4px">Total view</span></div>
<div class="nb c-beige" style="top:429px;height:21px"><svg class="ico" style="left:4px;top:1px" width="18" height="17" viewBox="0 0 18 17"><rect x="1" y=".8" width="15.600" height="15" rx="1" fill="#f6f4f2" stroke="#1a1a1a" stroke-width="1.300"/><circle cx="8" cy="7.300" r="3.800" fill="#b4daff" stroke="#16264a" stroke-width="1.500"/><path d="M11 10.300l3.600 3.700" stroke="#d88a30" stroke-width="2.200"/><path d="M10.600 10l1.200 1.200" stroke="#16264a" stroke-width="1.600"/></svg><span style="top:4px">Detail view</span></div>
<div class="lbl" style="left:8px;width:134px;text-align:center;top:463px">Rotating angle [°]</div>
<div class="rb c-beiged" style="left:8px;top:478px;width:42px"><svg class="ico" style="left:14px;top:3px" width="15" height="13" viewBox="0 0 15 13"><path d="M3.800 6C5.200 2.600 9.600 1 12 3.700c2 2.400.8 5.800-2.200 7.400" fill="none" stroke="#a09a95" stroke-width="3.200"/><path d="M.3 2.600L.6 8.300 5.800 8z" fill="#e6ded8" stroke="#a09a95" stroke-width="1"/><path d="M3.800 6C5.200 2.600 9.600 1 12 3.700c2 2.400.8 5.800-2.200 7.400" fill="none" stroke="#e2dad3" stroke-width="1.300"/></svg></div>
<div class="rb c-beiged" style="left:101px;top:478px;width:41px"><svg class="ico" style="left:12px;top:3px" width="15" height="13" viewBox="0 0 15 13"><g transform="translate(15,0) scale(-1,1)"><path d="M3.800 6C5.200 2.600 9.600 1 12 3.700c2 2.400.8 5.800-2.200 7.400" fill="none" stroke="#a09a95" stroke-width="3.200"/><path d="M.3 2.600L.6 8.300 5.800 8z" fill="#e6ded8" stroke="#a09a95" stroke-width="1"/><path d="M3.800 6C5.200 2.600 9.600 1 12 3.700c2 2.400.8 5.800-2.200 7.400" fill="none" stroke="#e2dad3" stroke-width="1.300"/></g></svg></div>
<div class="rb c-beiged" style="left:8px;top:528px;width:42px"><svg class="ico" style="left:14px;top:3px" width="15" height="13" viewBox="0 0 15 13"><path d="M3.800 6C5.200 2.600 9.600 1 12 3.700c2 2.400.8 5.800-2.200 7.400" fill="none" stroke="#a09a95" stroke-width="3.200"/><path d="M.3 2.600L.6 8.300 5.800 8z" fill="#e6ded8" stroke="#a09a95" stroke-width="1"/><path d="M3.800 6C5.200 2.600 9.600 1 12 3.700c2 2.400.8 5.800-2.200 7.400" fill="none" stroke="#e2dad3" stroke-width="1.300"/></svg></div>
<div class="rb c-beiged" style="left:101px;top:528px;width:41px"><svg class="ico" style="left:12px;top:3px" width="15" height="13" viewBox="0 0 15 13"><g transform="translate(15,0) scale(-1,1)"><path d="M3.800 6C5.200 2.600 9.600 1 12 3.700c2 2.400.8 5.800-2.200 7.400" fill="none" stroke="#a09a95" stroke-width="3.200"/><path d="M.3 2.600L.6 8.300 5.800 8z" fill="#e6ded8" stroke="#a09a95" stroke-width="1"/><path d="M3.800 6C5.200 2.600 9.600 1 12 3.700c2 2.400.8 5.800-2.200 7.400" fill="none" stroke="#e2dad3" stroke-width="1.300"/></g></svg></div>
<div class="tf" style="left:54px;top:478px;width:43px;height:21px"><span style="top:4px;left:2px">4.0</span></div>
<div class="lbl" style="left:8px;width:134px;text-align:center;top:512px">Rotation</div>
<div class="rb c-dis" style="left:54px;top:528px;width:43px"><span class="abs" style="left:0;right:0;top:3px;text-align:center;color:#8c8c8c">Stop</span></div>
<div class="lbl" style="left:162px;top:481px">Gear</div>
<div class="lbl" style="left:200px;top:463px">Tooth thick. allow. [µm]</div>
<div class="lbl" style="left:332px;top:463px">Tip Ø allowance [µm]</div>
<div class="sb c-beiged" style="left:202px;width:18px"><svg class="ico" style="left:3px;top:1px" width="10" height="13" viewBox="0 0 10 13"><path d="M7.600 2.200L3 6.500L7.600 10.800" fill="none" stroke="#f0eae4" stroke-width="1.200"/><path d="M6.600 2.200L2 6.500L6.600 10.800" fill="none" stroke="#a39a93" stroke-width="1.300"/></svg></div>
<div class="sb c-beiged" style="left:220px;width:17px"><div class="abs" style="left:3px;top:7px;width:9px;height:1px;background:#a39a93"></div><div class="abs" style="left:3px;top:8px;width:9px;height:1px;background:#f0eae4"></div></div>
<div class="sb c-beiged" style="left:237px;width:18px"><svg class="ico" style="left:3px;top:1px" width="10" height="13" viewBox="0 0 10 13"><g transform="translate(10,0) scale(-1,1)"><path d="M7.600 2.200L3 6.500L7.600 10.800" fill="none" stroke="#f0eae4" stroke-width="1.200"/><path d="M6.600 2.200L2 6.500L6.600 10.800" fill="none" stroke="#a39a93" stroke-width="1.300"/></g></svg></div>
<div class="sb c-beiged" style="left:333px;width:18px"><svg class="ico" style="left:3px;top:1px" width="10" height="13" viewBox="0 0 10 13"><path d="M7.600 2.200L3 6.500L7.600 10.800" fill="none" stroke="#f0eae4" stroke-width="1.200"/><path d="M6.600 2.200L2 6.500L6.600 10.800" fill="none" stroke="#a39a93" stroke-width="1.300"/></svg></div>
<div class="sb c-beiged" style="left:351px;width:17px"><div class="abs" style="left:3px;top:7px;width:9px;height:1px;background:#a39a93"></div><div class="abs" style="left:3px;top:8px;width:9px;height:1px;background:#f0eae4"></div></div>
<div class="sb c-beiged" style="left:368px;width:18px"><svg class="ico" style="left:3px;top:1px" width="10" height="13" viewBox="0 0 10 13"><g transform="translate(10,0) scale(-1,1)"><path d="M7.600 2.200L3 6.500L7.600 10.800" fill="none" stroke="#f0eae4" stroke-width="1.200"/><path d="M6.600 2.200L2 6.500L6.600 10.800" fill="none" stroke="#a39a93" stroke-width="1.300"/></g></svg></div>
<div class="tf" style="left:264px;top:478px;width:46px;height:18px"><span>-90.0</span></div>
<div class="tf" style="left:390px;top:478px;width:45px;height:18px"><span>0.0</span></div>
<div class="lbl" style="left:472px;top:465px">Display the tooth form</div>
<div class="abs" style="left:475px;top:486px;width:11px;height:11px;box-sizing:border-box;background:#c8ced6;border:1px solid;border-color:#959da7 #d6dbe1 #d6dbe1 #959da7"></div>
<div class="lbl" style="left:490px;top:485px;color:#7b8087">with allowance</div>
</div></body></html>
